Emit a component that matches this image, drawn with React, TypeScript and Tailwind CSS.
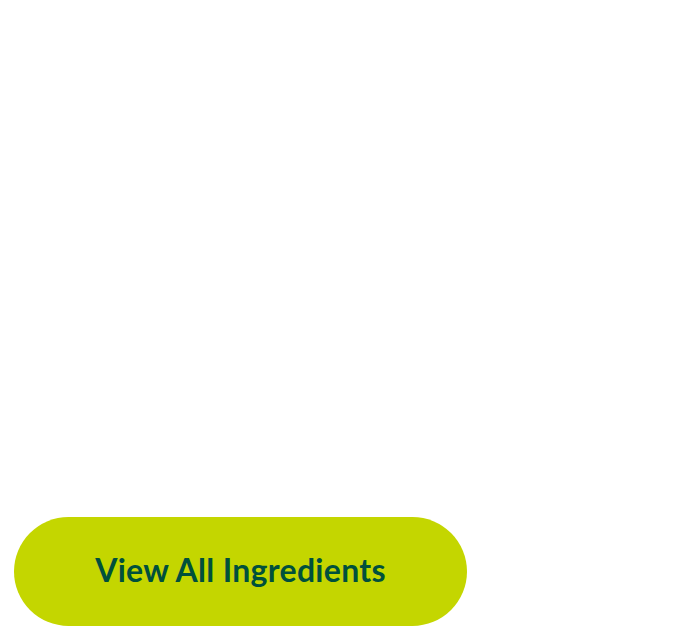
export default function App() {
  return (
    <div className="flex h-[626px] w-[678px] flex-col justify-end bg-white pl-[14px]">
      <button
        type="button"
        className="flex h-[109px] w-[453px] items-center justify-center rounded-full bg-[#c4d600] pb-[4px] text-[32px] font-bold tracking-[0.3px] text-[#00503c]"
        style={{ fontFamily: 'Lato, "Noto Sans", sans-serif' }}
      >
        View All Ingredients
      </button>
    </div>
  );
}
